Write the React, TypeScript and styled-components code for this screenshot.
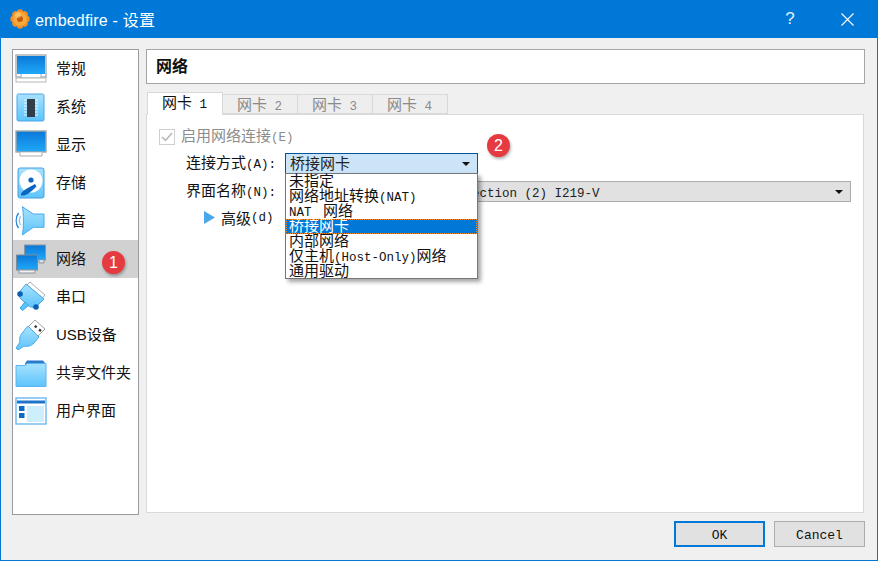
import React from "react";
import styled, { createGlobalStyle } from "styled-components";

const Global = createGlobalStyle`
  html, body { margin: 0; padding: 0; background: #f0f0f0; }
  * { box-sizing: border-box; }
`;

const cjk = `"Noto Sans CJK SC", "Liberation Sans", sans-serif`;
const mono = `"Liberation Mono", "Noto Sans CJK SC", monospace`;

const Window = styled.div`
  width: 878px;
  height: 561px;
  border: 1px solid #0078d7;
  border-top: 0;
  background: #f0f0f0;
  display: flex;
  flex-direction: column;
  font-family: ${cjk};
  color: #111;
  overflow: hidden;
`;
const TitleBar = styled.header`
  height: 38px;
  flex: none;
  background: #0078d7;
  display: flex;
  align-items: center;
  padding: 0 0 0 9px;
  color: #fff;
`;
const TitleText = styled.span`
  margin-left: 5px;
  font-size: 16px;
  font-family: "Liberation Sans", ${cjk};
  letter-spacing: 0.2px;
`;
const TitleButtons = styled.div`
  margin-left: auto;
  display: flex;
  align-items: center;
`;
const HelpMark = styled.span`
  width: 46px;
  text-align: center;
  font: 17px "Liberation Sans", sans-serif;
  color: #e8f2fb;
  margin-right: 11px;
`;
const CloseBox = styled.span`
  width: 46px;
  height: 38px;
  display: flex;
  align-items: center;
  justify-content: center;
  margin-right: 7px;
`;
const Body = styled.div`
  flex: 1;
  min-height: 0;
  display: grid;
  grid-template-columns: 127px 719px;
  column-gap: 7px;
  padding: 11px 13px 0 11px;
  height: 477px;
`;
const Sidebar = styled.nav`
  height: 466px;
  border: 1px solid #9a9a9f;
  background: #fff;
  display: flex;
  flex-direction: column;
  position: relative;
`;
const NavItem = styled.div<{ $active?: boolean }>`
  height: 38px;
  flex: none;
  display: flex;
  align-items: center;
  padding-left: 2px;
  background: ${(p) => (p.$active ? "#d1d1d1" : "transparent")};
  position: relative;
`;
const NavIcon = styled.svg`
  width: 32px;
  height: 32px;
  flex: none;
`;
const NavLabel = styled.span`
  margin-left: 9px;
  font-size: 15px;
  line-height: 20px;
  white-space: nowrap;
  font-family: "Liberation Sans", ${cjk};
`;
const Badge = styled.span`
  position: absolute;
  width: 23px;
  height: 23px;
  border-radius: 50%;
  background: #e53b40;
  color: #fff;
  font: 16px/23px "Liberation Sans", sans-serif;
  text-align: center;
  box-shadow: 1px 2px 3px rgba(0, 0, 0, 0.3);
`;
const NavBadge = styled(Badge)`
  left: 89px;
  top: 11px;
`;
const FormBadge = styled(Badge)`
  left: 340px;
  top: 19px;
`;
const Main = styled.main`
  display: flex;
  flex-direction: column;
  min-width: 0;
  height: 466px;
`;
const Header = styled.div`
  height: 35px;
  flex: none;
  border: 1px solid #a5a5a5;
  background: #fff;
  padding: 0 0 4px 9px;
  display: flex;
  align-items: center;
  font-size: 16px;
  font-weight: 700;
`;
const Tabs = styled.div`
  margin-top: 8px;
  height: 22px;
  flex: none;
  display: flex;
  align-items: flex-end;
  padding-left: 1px;
  position: relative;
  z-index: 1;
`;
const Tab = styled.div<{ $active?: boolean }>`
  width: ${(p) => (p.$active ? 76 : 75)}px;
  height: ${(p) => (p.$active ? 23 : 20)}px;
  margin-bottom: ${(p) => (p.$active ? -1 : 0)}px;
  background: ${(p) => (p.$active ? "#fff" : "#eeeeee")};
  border: 1px solid #d9d9d9;
  border-left-width: ${(p) => (p.$active ? 1 : 0)}px;
  border-bottom: ${(p) => (p.$active ? "0" : "1px solid #d9d9d9")};
  color: ${(p) => (p.$active ? "#111" : "#8a8a8a")};
  font-size: 15px;
  line-height: 18px;
  padding-left: 14px;
  white-space: nowrap;
`;
const Panel = styled.section`
  flex: 1;
  min-height: 0;
  background: #fff;
  border: 1px solid #d9d9d9;
  position: relative;
  padding: 14px 12px 0 12px;
  margin: 0 1px 2px 0;
`;
const Lat = styled.span`
  font-family: ${mono};
  font-size: 12.5px;
  white-space: pre;
`;
const NatWord = styled(Lat)`
  margin-right: 4px;
`;
const CheckRow = styled.div`
  display: flex;
  align-items: center;
  height: 16px;
  color: #8c8c8c;
  font-size: 15px;
  white-space: pre;
`;
const CheckLabel = styled.span`
  padding-bottom: 5px;
`;
const CheckBox = styled.span`
  width: 16px;
  height: 16px;
  border: 1px solid #cfcfcf;
  background: #fff;
  margin-right: 6px;
  display: flex;
  align-items: center;
  justify-content: center;
`;
const FormRow = styled.div<{ $first?: boolean }>`
  display: flex;
  align-items: center;
  height: 21px;
  margin-top: ${(p) => (p.$first ? 8 : 7)}px;
  padding-left: 27px;
`;
const FieldLabel = styled.label`
  width: 99px;
  flex: none;
  font-size: 15px;
  padding-bottom: 4px;
  white-space: nowrap;
`;
const ComboWrap = styled.div`
  position: relative;
  flex: none;
`;
const Combo = styled.div<{ $open?: boolean }>`
  height: 21px;
  width: ${(p) => (p.$open ? 193 : 566)}px;
  border: 1px solid ${(p) => (p.$open ? "#005499" : "#adadad")};
  background: ${(p) => (p.$open ? "#cce4f7" : "#e1e1e1")};
  display: flex;
  align-items: center;
  padding: 0 6px 2px 4px;
  font-size: 15px;
  white-space: nowrap;
  overflow: hidden;
`;
const ComboText = styled.span<{ $pad?: number }>`
  flex: 1;
  padding-left: ${(p) => p.$pad ?? 0}px;
  color: #222;
`;
const Caret = styled.span`
  width: 0;
  height: 0;
  flex: none;
  border-left: 4px solid transparent;
  border-right: 4px solid transparent;
  border-top: 4px solid #111;
  margin: 2px 1px 0 0;
`;
const Popup = styled.ul`
  position: absolute;
  left: 0;
  top: 20px;
  width: 193px;
  height: 106px;
  margin: 0;
  padding: 0;
  list-style: none;
  background: #fff;
  border: 1px solid #767676;
  box-shadow: 3px 3px 4px rgba(0, 0, 0, 0.35);
  z-index: 5;
`;
const PopupItem = styled.li<{ $sel?: boolean }>`
  height: 15px;
  line-height: 12px;
  padding-left: 3px;
  font-size: 15px;
  white-space: nowrap;
  color: ${(p) => (p.$sel ? "#fff" : "#111")};
  background: ${(p) => (p.$sel ? "#0078d7" : "transparent")};
  outline: ${(p) => (p.$sel ? "1px dotted #f08a24" : "none")};
  outline-offset: -1px;
`;
const Advanced = styled.div`
  display: flex;
  align-items: center;
  margin-top: 6px;
  padding: 0 0 2px 45px;
  height: 21px;
  font-size: 15px;
`;
const Tri = styled.svg`
  width: 11px;
  height: 13px;
  margin: 0 6px 0 0;
  flex: none;
`;
const Footer = styled.footer`
  height: 46px;
  flex: none;
  display: flex;
  justify-content: flex-end;
  align-items: flex-start;
  gap: 9px;
  padding: 7px 12px 0 0;
`;
const Button = styled.button<{ $primary?: boolean }>`
  width: 91px;
  height: 26px;
  padding: 3px 0 0;
  background: #e1e1e1;
  border: ${(p) => (p.$primary ? "2px solid #0078d7" : "1px solid #adadad")};
  font: 13px ${mono};
  color: #111;
`;

const defs = (
  <defs>
    <linearGradient id="scr" x1="0" y1="0" x2="0" y2="1">
      <stop offset="0" stopColor="#0a78d8" />
      <stop offset="1" stopColor="#20a8f8" />
    </linearGradient>
    <linearGradient id="lite" x1="0" y1="0" x2="0" y2="1">
      <stop offset="0" stopColor="#a8e2fe" />
      <stop offset="1" stopColor="#5cc4fb" />
    </linearGradient>
  </defs>
);

const Monitor = () => (
  <NavIcon viewBox="0 0 32 32">
    <rect x="1" y="2" width="30" height="22" fill="#fff" stroke="#a9adb0" strokeWidth="1.4" />
    <rect x="2" y="3" width="28" height="18" fill="url(#scr)" />
    <path d="M6 21v4h20v-4" fill="#fff" stroke="#a9adb0" />
    <rect x="1" y="25" width="30" height="4" fill="#fff" stroke="#b5b8ba" />
  </NavIcon>
);
const Display = () => (
  <NavIcon viewBox="0 0 32 32">
    <rect x="1" y="2" width="30" height="21" fill="url(#scr)" stroke="#a3a7aa" strokeWidth="1.4" />
    <path d="M5 23.5v3.5h22v-3.5" fill="#fff" stroke="#a9adb0" />
  </NavIcon>
);
const Chip = () => (
  <NavIcon viewBox="0 0 32 32">
    <rect x="2" y="3" width="27" height="27" rx="1.5" fill="url(#lite)" stroke="#4da6e6" />
    <path d="M9 9h14M9 12h14M9 15h14M9 18h14M9 21h14M9 24h14" stroke="#e6f7ff" strokeWidth="1" />
    <rect x="12" y="8" width="8" height="18" fill="#333d47" />
  </NavIcon>
);
const Disk = () => (
  <NavIcon viewBox="0 0 32 32">
    <rect x="3" y="1" width="26" height="30" rx="2" fill="url(#lite)" stroke="#3f9fe2" />
    <circle cx="16" cy="14" r="11.5" fill="#fff" />
    <circle cx="16" cy="13" r="2.6" fill="#0b66c2" />
    <path d="M6 27c1-3 8-7 14-10l1.5 2.5c-4 4-9 8.5-13 9-2 .2-3-.3-2.5-1.500z" fill="#0b66c2" />
  </NavIcon>
);
const Speaker = () => (
  <NavIcon viewBox="0 0 32 32">
    <path d="M7.300 1.700L18.300 9H29v13.300H18.300L7.300 30c1.500-4 1.500-24 0-28.300z" fill="url(#lite)" stroke="#4aa8ea" />
    <path d="M3.500 8c-3 4.500-3 10.500 0 15" fill="none" stroke="#2586d6" strokeWidth="1.400" />
    <path d="M5.500 11c-1.500 3-1.500 6 0 9" fill="none" stroke="#7cc4f2" strokeWidth="1.200" />
  </NavIcon>
);
const Network = () => (
  <NavIcon viewBox="0 0 32 32">
    <rect x="9.500" y="2" width="21" height="15" fill="url(#scr)" stroke="#8b98a3" />
    <path d="M24 17v3h5v-3" fill="#d8dde0" stroke="#8b98a3" />
    <rect x="1.500" y="12" width="21" height="15" fill="url(#scr)" stroke="#7d8c98" />
    <rect x="4" y="27" width="16" height="3" fill="#eef0f1" stroke="#8b98a3" />
  </NavIcon>
);
const Serial = () => (
  <NavIcon viewBox="0 0 32 32">
    <path d="M15 1l15 13-2.500 3L12 4z" fill="#fff" stroke="#a9adb0" />
    <path d="M11 3l18 15-6 6c-3 3-7 3-10 .5L6 18c-2.500-2.500-2-6 0-9z" fill="url(#lite)" stroke="#4aa8ea" />
    <circle cx="5" cy="13" r="2.800" fill="#0b5fb5" />
    <circle cx="21" cy="26" r="2.800" fill="#0b5fb5" />
    <path d="M10 21l-5 6 2.500 2.500 6-5z" fill="#5cc4fb" stroke="#3f9fe2" />
  </NavIcon>
);
const Usb = () => (
  <NavIcon viewBox="0 0 32 32">
    <path d="M20 1l10 9-7 7-10-9z" fill="#fff" stroke="#9da1a4" />
    <rect x="20" y="6.500" width="2.400" height="2.400" fill="#333" transform="rotate(40 21 7)" />
    <rect x="24" y="10" width="2.400" height="2.400" fill="#333" transform="rotate(40 25 11)" />
    <path d="M13 7l11 11-5 6c-3 3-7 4-10 3l-6 4-2-2 4-6c-1-3 0-7 3-10z" fill="url(#lite)" stroke="#4aa8ea" />
  </NavIcon>
);
const Folder = () => (
  <NavIcon viewBox="0 0 32 32">
    <path d="M10 6.500l2-3h16l2 2.500v3H10z" fill="#2b78cc" />
    <path d="M1 8.500h9l2-2h19v23H1z" fill="url(#lite)" stroke="#5ab4ee" />
  </NavIcon>
);
const UiWin = () => (
  <NavIcon viewBox="0 0 32 32">
    <rect x="1" y="3" width="30" height="26" fill="#fff" stroke="#6bb8ee" strokeWidth="1.400" />
    <rect x="2" y="5.500" width="28" height="3" fill="#1d74c9" />
    <rect x="4" y="11" width="5.500" height="5" fill="#0f6cc4" />
    <rect x="4" y="18" width="5.500" height="5" fill="#0f6cc4" />
    <rect x="12" y="11" width="17" height="16" fill="#cdeefd" />
  </NavIcon>
);

const Gear = () => (
  <svg width="20" height="20" viewBox="0 0 20 20" style={{ flex: "none" }}>
    <g fill="#f08f28">
      {[0, 45, 90, 135, 180, 225, 270, 315].map((a) => (
        <circle key={a} cx="10" cy="3.500" r="3.200" transform={`rotate(${a} 10 10)`} />
      ))}
      <circle cx="10" cy="10" r="7" fill="#f7a93a" />
    </g>
    <circle cx="10" cy="10" r="3" fill="#c85a10" />
    <circle cx="8" cy="6" r="3" fill="#fbd27f" opacity=".6" />
  </svg>
);

const items: [string, React.ReactNode][] = [
  ["常规", <Monitor />],
  ["系统", <Chip />],
  ["显示", <Display />],
  ["存储", <Disk />],
  ["声音", <Speaker />],
  ["网络", <Network />],
  ["串口", <Serial />],
  ["USB设备", <Usb />],
  ["共享文件夹", <Folder />],
  ["用户界面", <UiWin />],
];

export default function App() {
  return (
    <Window>
      <Global />
      <svg width="0" height="0" style={{ position: "absolute" }}>{defs}</svg>
      <TitleBar>
        <Gear />
        <TitleText>embedfire - 设置</TitleText>
        <TitleButtons>
          <HelpMark>?</HelpMark>
          <CloseBox>
            <svg width="13" height="13" viewBox="0 0 13 13">
              <path d="M.5.500l12 12M12.500.500l-12 12" stroke="#fff" strokeWidth="1.100" fill="none" />
            </svg>
          </CloseBox>
        </TitleButtons>
      </TitleBar>
      <Body>
        <Sidebar>
          {items.map(([label, icon]) => (
            <NavItem key={label} $active={label === "网络"}>
              {icon}
              <NavLabel>{label}</NavLabel>
              {label === "网络" && <NavBadge>1</NavBadge>}
            </NavItem>
          ))}
        </Sidebar>
        <Main>
          <Header>网络</Header>
          <Tabs>
            <Tab $active>网卡<Lat> 1</Lat></Tab>
            <Tab>网卡<Lat> 2</Lat></Tab>
            <Tab>网卡<Lat> 3</Lat></Tab>
            <Tab>网卡<Lat> 4</Lat></Tab>
          </Tabs>
          <Panel>
            <FormBadge>2</FormBadge>
            <CheckRow>
              <CheckBox>
                <svg width="12" height="10" viewBox="0 0 12 10">
                  <path d="M1 5l3.500 3.500L11 1" fill="none" stroke="#b5b5b5" strokeWidth="1.500" />
                </svg>
              </CheckBox>
              <CheckLabel>启用网络连接<Lat>(E)</Lat></CheckLabel>
            </CheckRow>
            <FormRow $first>
              <FieldLabel>连接方式<Lat>(A):</Lat></FieldLabel>
              <ComboWrap>
                <Combo $open>
                  <ComboText>桥接网卡</ComboText>
                  <Caret />
                </Combo>
                <Popup>
                  <PopupItem>未指定</PopupItem>
                  <PopupItem>网络地址转换<Lat>(NAT)</Lat></PopupItem>
                  <PopupItem><NatWord>NAT </NatWord>网络</PopupItem>
                  <PopupItem $sel>桥接网卡</PopupItem>
                  <PopupItem>内部网络</PopupItem>
                  <PopupItem>仅主机<Lat>(Host-Only)</Lat>网络</PopupItem>
                  <PopupItem>通用驱动</PopupItem>
                </Popup>
              </ComboWrap>
            </FormRow>
            <FormRow>
              <FieldLabel>界面名称<Lat>(N):</Lat></FieldLabel>
              <Combo>
                <ComboText $pad={17}><Lat>Intel(R) Ethernet Connection (2) I219-V</Lat></ComboText>
                <Caret />
              </Combo>
            </FormRow>
            <Advanced>
              <Tri viewBox="0 0 11 13">
                <path d="M0 0l11 6.500L0 13z" fill="#4aa8ea" />
              </Tri>
              高级<Lat>(d)</Lat>
            </Advanced>
          </Panel>
        </Main>
      </Body>
      <Footer>
        <Button $primary>OK</Button>
        <Button>Cancel</Button>
      </Footer>
    </Window>
  );
}
